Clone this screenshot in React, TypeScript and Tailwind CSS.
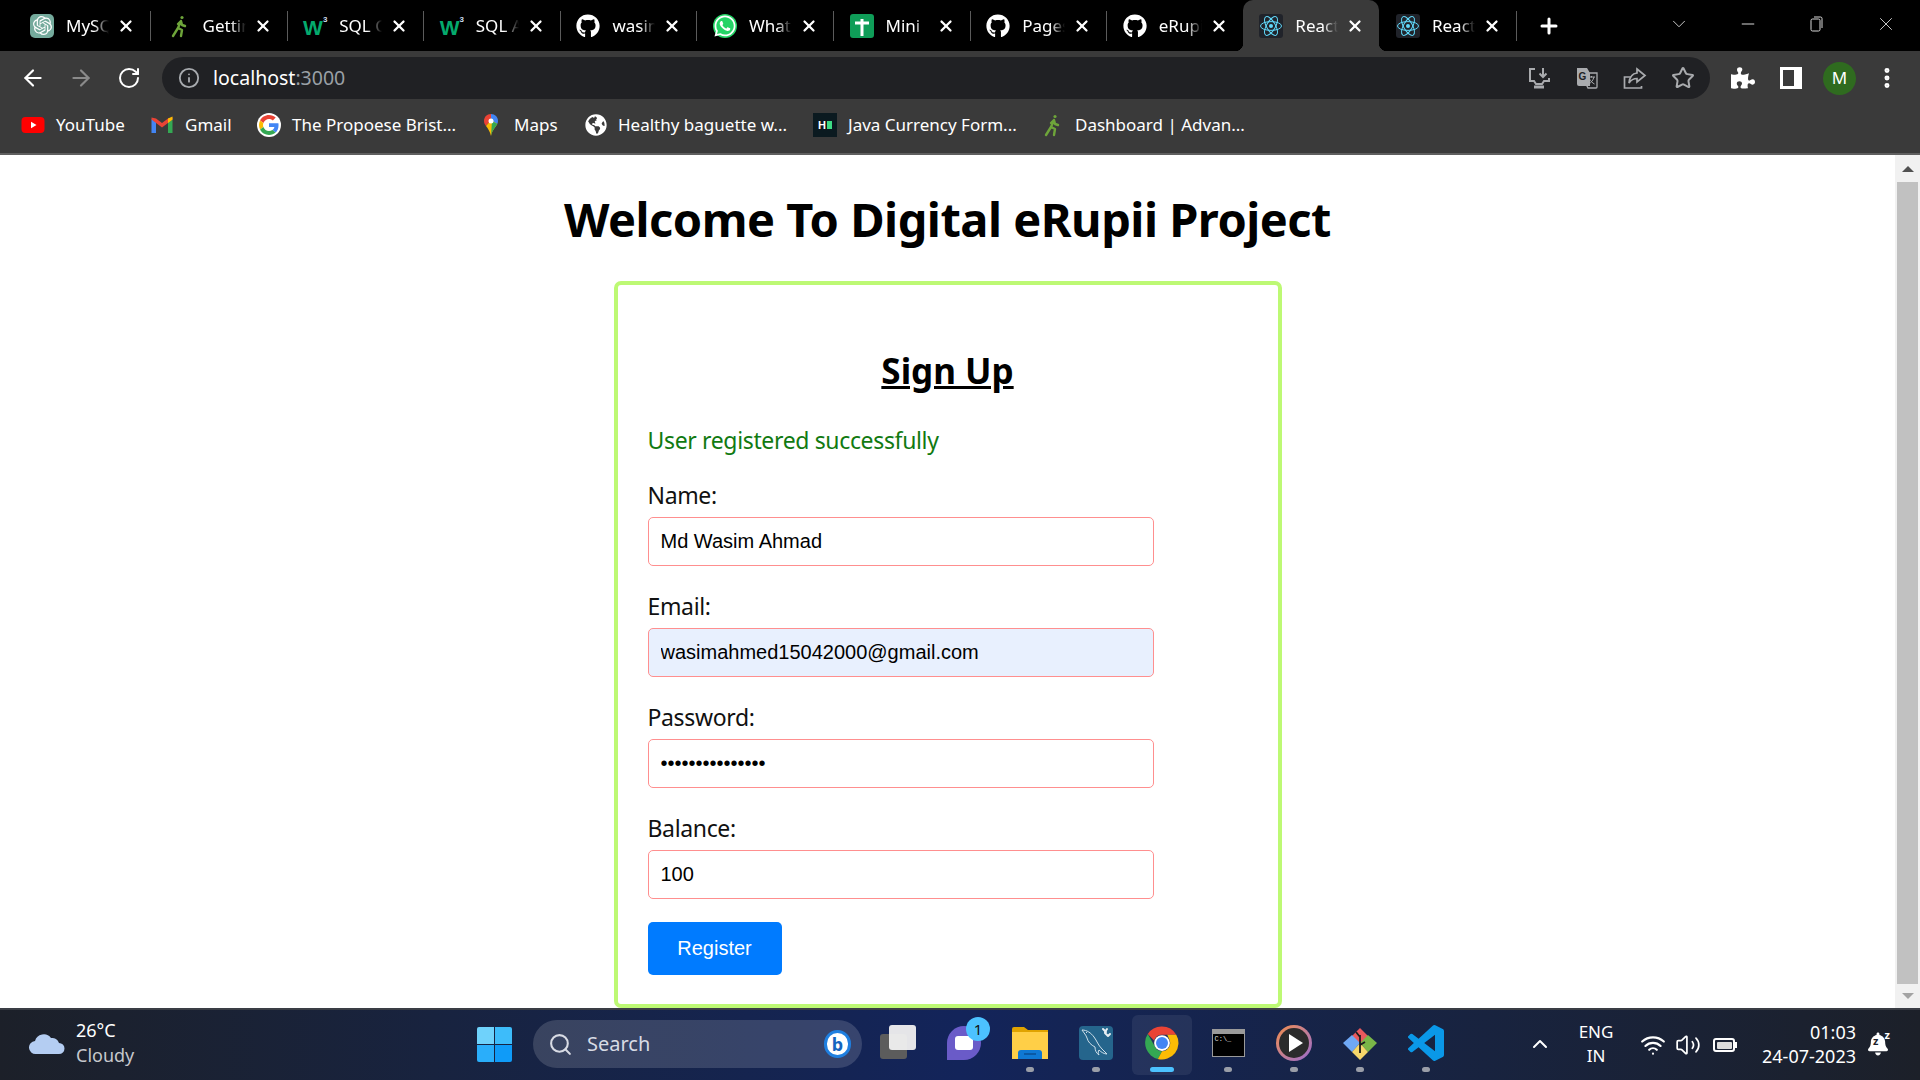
import React from 'react';
import { ArrowLeft, ArrowRight, ChevronDown, ChevronUp, EllipsisVertical, Info, Minus, Plus, RotateCw, Search, Star, Volume2, Wifi, X } from 'lucide-react';
import { FaBell, FaGithub, FaGlobeAmericas, FaPuzzlePiece, FaWhatsapp } from 'react-icons/fa';
import { SiOpenai } from 'react-icons/si';

const Runner = () => (
  <svg viewBox="0 0 24 24" className="w-6 h-6" fill="none" stroke="#6ea53a" strokeWidth="2.4" strokeLinecap="round" strokeLinejoin="round">
    <circle cx="15" cy="3.5" r="1.6" fill="#6ea53a" stroke="none" />
    <path d="M14 7l-3 7-5 8M14 7l1 4 3 1M11 14l4 2-1 6M14 7l-3 3" />
  </svg>
);

const ChatGpt = () => (
  <div className="w-6 h-6 rounded-[5px] bg-[#74aa9c] flex items-center justify-center">
    <SiOpenai className="w-[19px] h-[19px] text-white" />
  </div>
);

const W3 = () => (
  <div className="w-6 h-6 flex items-start justify-center text-[#04aa6d] font-bold leading-none font-['Liberation_Sans',sans-serif]">
    <span className="text-[21px] mt-[3px]">W</span>
    <span className="text-[8px] text-[#cde] mt-[2px]">3</span>
  </div>
);

const GitHub = () => <FaGithub className="w-6 h-6 text-white" />;

const WhatsApp = () => (
  <div className="w-6 h-6 rounded-full bg-[#25d366] flex items-center justify-center">
    <FaWhatsapp className="w-6 h-6 text-white" />
  </div>
);

const Mini = () => (
  <div className="w-6 h-6 rounded-[3px] bg-[#0f9d58] flex items-center justify-center">
    <svg viewBox="0 0 24 24" className="w-6 h-6" stroke="#fff" strokeWidth="3">
      <path d="M5 9h14M12 5v17" />
    </svg>
  </div>
);

const ReactLogo = () => (
  <div className="w-6 h-6 rounded-[3px] bg-[#20232a] flex items-center justify-center">
    <svg viewBox="-12 -12 24 24" className="w-6 h-6" fill="none" stroke="#61dafb" strokeWidth="1">
      <circle r="2" fill="#61dafb" stroke="none" />
      <ellipse rx="10.5" ry="4.4" />
      <ellipse rx="10.5" ry="4.4" transform="rotate(60)" />
      <ellipse rx="10.5" ry="4.4" transform="rotate(120)" />
    </svg>
  </div>
);

const tabs = [
  { title: 'MySQL', icon: <ChatGpt /> },
  { title: 'Getting', icon: <Runner /> },
  { title: 'SQL Cre', icon: <W3 /> },
  { title: 'SQL And', icon: <W3 /> },
  { title: 'wasim', icon: <GitHub /> },
  { title: 'WhatsApp', icon: <WhatsApp /> },
  { title: 'Mini', icon: <Mini /> },
  { title: 'Pages', icon: <GitHub /> },
  { title: 'eRupii', icon: <GitHub /> },
  { title: 'React', icon: <ReactLogo />, active: true },
  { title: 'React', icon: <ReactLogo /> },
];

const GoogleG = () => (
  <div className="w-6 h-6 rounded-full bg-white flex items-center justify-center">
    <svg viewBox="0 0 48 48" className="w-5 h-5">
      <path fill="#ea4335" d="M24 9.5c3.5 0 6.700 1.200 9.200 3.600l6.900-6.900C35.900 2.400 30.500 0 24 0 14.600 0 6.500 5.400 2.600 13.200l8 6.200C12.500 13.600 17.800 9.500 24 9.500z" />
      <path fill="#4285f4" d="M46.900 24.500c0-1.600-.1-3.100-.4-4.500H24v9h12.900c-.6 3-2.200 5.500-4.800 7.200l7.700 6c4.500-4.200 7.100-10.300 7.100-17.700z" />
      <path fill="#fbbc05" d="M10.500 28.600c-.5-1.400-.8-3-.8-4.600s.3-3.200.8-4.600l-8-6.200C.9 16.500 0 20.100 0 24s.9 7.500 2.600 10.800l7.900-6.200z" />
      <path fill="#34a853" d="M24 48c6.500 0 11.900-2.100 15.900-5.800l-7.700-6c-2.200 1.500-4.900 2.300-8.200 2.300-6.200 0-11.500-4.200-13.400-9.800l-8 6.200C6.500 42.600 14.600 48 24 48z" />
    </svg>
  </div>
);

const YouTube = () => (
  <svg viewBox="0 0 24 24" className="w-6 h-6">
    <rect x="0.500" y="4" width="23" height="16" rx="4" fill="#ff0000" />
    <path d="M10 8.800v6.400l5.500-3.200z" fill="#fff" />
  </svg>
);

const Gmail = () => (
  <svg viewBox="0 0 24 24" className="w-6 h-6">
    <path d="M1.500 6v14h4.500V9z" fill="#4285f4" />
    <path d="M22.500 6v14H18V9z" fill="#34a853" />
    <path d="M1.500 6.500L12 14.500l10.500-8V4.500L18 5.500 12 10 6 5.500 1.500 4.500z" fill="#ea4335" />
    <path d="M18 5.500l4.500-2v3L18 10z" fill="#fbbc05" />
  </svg>
);

const MapsPin = () => (
  <svg viewBox="0 0 24 24" className="w-6 h-6">
    <path d="M12 1C7.700 1 5 4.200 5 8c0 2 .8 3.400 2 5l5-6z" fill="#ea4335" />
    <path d="M12 1c4 0 7 3.200 7 7 0 1-.2 2-.7 3L12 8z" fill="#4285f4" />
    <path d="M7 13l5-6 6.300 4c-1.500 3-5 5.500-6.300 12-.8-4-3-7.500-5-10z" fill="#fbbc05" />
    <path d="M12 23c1.300-6.500 4.800-9 6.300-12L13 8z" fill="#34a853" />
    <circle cx="12" cy="8" r="2.500" fill="#fff" />
  </svg>
);

const JavaLogo = () => (
  <div className="w-6 h-6 bg-[#0b1a20] flex items-center justify-center gap-[1px] text-[11px] font-bold text-white font-['Liberation_Sans',sans-serif]">
    H<span className="w-[5px] h-[8px] bg-[#3ddc84]" />
  </div>
);

const bookmarks = [
  { label: 'YouTube', icon: <YouTube />, width: 'w-[129px]' },
  { label: 'Gmail', icon: <Gmail />, width: 'w-[107px]' },
  { label: 'The Propoese Brist...', icon: <GoogleG />, width: 'w-[222px]' },
  { label: 'Maps', icon: <MapsPin />, width: 'w-[106px]' },
  { label: 'Healthy baguette w...', icon: <FaGlobeAmericas className="w-[22px] h-[22px] text-white" />, width: 'w-[228px]' },
  { label: 'Java Currency Form...', icon: <JavaLogo />, width: 'w-[227px]' },
  { label: 'Dashboard | Advan...', icon: <Runner />, width: 'w-[260px]' },
];

const TabBar = () => (
  <div className="h-[51px] bg-black flex items-end pl-[14px] text-white shrink-0">
    {tabs.map((tab, index) => (
      <React.Fragment key={index}>
        <div className={`w-[136px] h-[51px] flex items-center pl-[16px] rounded-t-[10px] relative ${tab.active ? 'bg-[#3a3a3a]' : ''}`}>
          {tab.active && <div className="absolute -left-[8px] bottom-0 w-[8px] h-[8px] bg-[radial-gradient(circle_at_0_0,transparent_8px,#3a3a3a_8.5px)]" />}
          {tab.active && <div className="absolute -right-[8px] bottom-0 w-[8px] h-[8px] bg-[radial-gradient(circle_at_100%_0,transparent_8px,#3a3a3a_8.5px)]" />}
          {tab.icon}
          <span className="ml-[12px] w-[43px] text-[17px] whitespace-nowrap overflow-hidden [mask-image:linear-gradient(to_right,black_65%,transparent)]">{tab.title}</span>
          <X className="ml-[8px] w-[18px] h-[18px]" strokeWidth={3} />
        </div>
        <div className={`w-[0.6px] h-[30px] self-center ${tab.active || tabs[index + 1]?.active ? 'bg-transparent' : 'bg-[#5b5b5b]'}`} />
      </React.Fragment>
    ))}
    <div className="self-center ml-[16px] w-[32px] flex justify-center">
      <Plus className="w-[24px] h-[24px]" strokeWidth={3} />
    </div>
    <div className="self-center ml-auto flex items-center text-[#d8d8d8]">
      <ChevronDown className="w-[22px] h-[22px] mr-[48px] mb-[4px]" strokeWidth={1} />
      <Minus className="w-[20px] h-[20px] mr-[49px] mb-[4px]" strokeWidth={1.200} />
      <svg viewBox="0 0 20 20" className="w-[20px] h-[20px] mr-[48px] mb-[4px]" fill="none" stroke="#d8d8d8" strokeWidth="1">
        <rect x="4" y="5" width="9" height="12" rx="1.500" />
        <path d="M7 3h6.500A1.500 1.500 0 0 1 15 4.500V14" />
      </svg>
      <X className="w-[22px] h-[22px] mr-[23px] mb-[4px]" strokeWidth={1} />
    </div>
  </div>
);

const Toolbar = () => (
  <div className="h-[54px] bg-[#3a3a3a] flex items-center shrink-0">
    <ArrowLeft className="ml-[20px] w-[26px] h-[26px] text-white" strokeWidth={2} />
    <ArrowRight className="ml-[22px] w-[26px] h-[26px] text-[#8a8a8a]" strokeWidth={2} />
    <RotateCw className="ml-[23px] w-[24px] h-[24px] text-white" strokeWidth={2} />
    <div className="ml-[21px] w-[1548px] h-[42px] rounded-full bg-[#202124] flex items-center">
      <Info className="ml-[16px] w-[22px] h-[22px] text-[#a8abaf]" strokeWidth={2} />
      <span className="ml-[13px] text-[19.5px] text-white">localhost<span className="text-[#9aa0a6]">:3000</span></span>
      <div className="ml-auto flex items-center gap-[24px] mr-[15px] text-[#a9abae]">
        <svg viewBox="0 0 24 24" className="w-[24px] h-[24px]" fill="none" stroke="currentColor" strokeWidth="2">
          <path d="M8 3H3v12h4l2 3h6l2-3h5v-3M16 2v9M12.500 7.500L16 11l3.500-3.500" />
          <path d="M7 21h10" strokeWidth="3" />
        </svg>
        <svg viewBox="0 0 24 24" className="w-[24px] h-[24px]">
          <path d="M2 2h10l3 5v13H4a2 2 0 0 1-2-2z" fill="#a9abae" />
          <path d="M11 7h11v14a1 1 0 0 1-1 1h-8l-2-4" fill="none" stroke="#a9abae" strokeWidth="1.300" />
          <text x="3.500" y="14" fontSize="10" fontWeight="700" fill="#202124" fontFamily="Liberation Sans">G</text>
          <path d="M13 11h7M16.500 10v1.500M19 11c-1 3.500-3 6-5.500 7M14.500 13c1 2 3 4 5 5" fill="none" stroke="#a9abae" strokeWidth="1" />
        </svg>
        <svg viewBox="0 0 24 24" className="w-[24px] h-[24px]" fill="none" stroke="currentColor" strokeWidth="1.700">
          <path d="M8 11H1.500v11h17v-2" />
          <path d="M14 3l8 6.500-8 6.500v-3.500c-4 0-6 1.500-8 4.500 .5-5 3-9.500 8-10z" />
        </svg>
        <Star className="w-[24px] h-[24px]" strokeWidth={2} />
      </div>
    </div>
    <FaPuzzlePiece className="ml-[21px] w-[24px] h-[24px] text-white" />
    <div className="ml-[25px] w-[22px] h-[22px] border-[3px] border-r-[8px] border-white" />
    <div className="ml-[21px] w-[33px] h-[33px] rounded-full bg-[#2f6b1f] flex items-center justify-center text-white text-[17px]">M</div>
    <EllipsisVertical className="ml-[18px] w-[26px] h-[26px] text-white" strokeWidth={2.600} />
  </div>
);

const BookmarksBar = () => (
  <div className="h-[50px] bg-[#3a3a3a] border-b-2 border-[#5f5f5f] flex items-center pl-[21px] pb-[8px] text-white text-[17px] shrink-0">
    {bookmarks.map((bookmark, index) => (
      <div key={index} className={`${bookmark.width} flex items-center gap-[11px] whitespace-nowrap`}>
        {bookmark.icon}
        <span>{bookmark.label}</span>
      </div>
    ))}
  </div>
);

const Field = ({ label, value, type = 'text', filled = false }: { label: string; value: string; type?: string; filled?: boolean }) => (
  <div className="flex flex-col">
    <label className="h-[32px] leading-[31px] mb-[5px] text-[23px] tracking-[-0.35px] text-[#111]">{label}</label>
    <input
      readOnly
      type={type}
      value={value}
      className={`w-[506px] h-[49px] px-[12px] pb-[1px] border-[1.500px] border-[#ff8f8f] rounded-[5px] text-[20px] text-black font-['Liberation_Sans',sans-serif] outline-none ${filled ? 'bg-[#e8f0fe]' : 'bg-white'}`}
    />
  </div>
);

const SignUpCard = () => (
  <div className="mt-[30px] w-[668px] h-[727px] border-[4px] border-[#bdf974] rounded-[7px] bg-white pl-[30px] pt-[62px] shrink-0">
    <h2 className="h-[48px] leading-[48px] pr-[30px] text-center text-[35px] font-bold underline text-black">Sign Up</h2>
    <p className="mt-[29px] h-[33px] leading-[32px] text-[23px] tracking-[-0.35px] text-[#117a11]">User registered successfully</p>
    <div className="mt-[23px] flex flex-col gap-[25px]">
      <Field label="Name:" value="Md Wasim Ahmad" />
      <Field label="Email:" value="wasimahmed15042000@gmail.com" filled />
      <Field label="Password:" value="aaaaaaaaaaaaaaa" type="password" />
      <Field label="Balance:" value="100" />
    </div>
    <button className="mt-[23px] w-[134px] h-[53px] pb-[2px] bg-[#007bff] rounded-[5px] text-white text-[20px] font-['Liberation_Sans',sans-serif]">Register</button>
  </div>
);

const Scrollbar = () => (
  <div className="w-[25px] bg-[#f1f1f1] flex flex-col items-center shrink-0">
    <div className="h-[27px] flex items-center justify-center">
      <div className="w-0 h-0 border-x-[6px] border-x-transparent border-b-[6px] border-b-[#505050]" />
    </div>
    <div className="w-[21px] flex-1 bg-[#c1c1c1]" />
    <div className="h-[24px] flex items-center justify-center">
      <div className="w-0 h-0 border-x-[6px] border-x-transparent border-t-[6px] border-t-[#a3a3a3]" />
    </div>
  </div>
);

const TaskIcon = ({ children, dot = false, active = false }: { children: React.ReactNode; dot?: boolean; active?: boolean }) => (
  <div className="w-[66px] h-[60px] flex flex-col items-center relative">
    <div className={`w-[60px] h-[60px] rounded-[6px] flex items-center justify-center pb-[4px] ${active ? 'bg-[#ffffff12]' : ''}`}>{children}</div>
    {dot && <div className="absolute bottom-[3px] w-[8px] h-[5px] rounded-full bg-[#9a9ea8]" />}
    {active && <div className="absolute bottom-[3px] w-[24px] h-[5px] rounded-full bg-[#4cc2ff]" />}
  </div>
);

const ChromeLogo = () => (
  <svg viewBox="0 0 48 48" className="w-[36px] h-[36px]">
    <path d="M24 2a22 22 0 0 1 19 11H24a11 11 0 0 0-10.500 7.500L5 12A22 22 0 0 1 24 2z" fill="#ea4335" />
    <path d="M5 12l9.500 16.500A11 11 0 0 0 24 35l-5.500 10.300A22 22 0 0 1 5 12z" fill="#34a853" />
    <path d="M43 13a22 22 0 0 1-24.500 32.300L24 35a11 11 0 0 0 9.500-16.500L31 13z" fill="#fbbc05" />
    <circle cx="24" cy="24" r="10.500" fill="#fff" />
    <circle cx="24" cy="24" r="8" fill="#4285f4" />
  </svg>
);

const VsCode = () => (
  <svg viewBox="0 0 24 24" className="w-[36px] h-[36px]" fill="#0a98e8">
    <path d="M23.15 2.587L18.21.21a1.494 1.494 0 0 0-1.705.29l-9.46 8.63-4.12-3.128a.999.999 0 0 0-1.276.057L.327 7.261A1 1 0 0 0 .326 8.74L3.899 12 .326 15.26a1 1 0 0 0 .001 1.479L1.65 17.94a.999.999 0 0 0 1.276.057l4.12-3.128 9.46 8.63a1.492 1.492 0 0 0 1.704.29l4.942-2.377A1.5 1.5 0 0 0 24 20.06V3.939a1.5 1.5 0 0 0-.85-1.352zm-5.146 14.861L10.826 12l7.178-5.448v10.896z" />
  </svg>
);

const MySqlLogo = () => (
  <div className="w-[34px] h-[34px] rounded-[4px] bg-[#25658c]">
    <svg viewBox="0 0 34 34" className="w-[34px] h-[34px]" fill="none" stroke="#cfe0ea" strokeWidth="1" strokeLinejoin="round">
      <path d="M3 4c5 0 9 3 12 7 3 4 4 8 8 12l5 5c-3 0-6-2-8-4-1 1-1 3 0 5-3-2-4-5-4-8-4-2-7-5-8-9C7 9 5 7 3 4z" />
      <path d="M7 6l1 1" />
      <path d="M24 3l3 3-1 1 3 3 2-2M28 3l-2 3" strokeWidth="2" stroke="#e6eef3" strokeLinecap="round" />
    </svg>
  </div>
);

const Taskbar = () => (
  <div className="h-[72px] border-t-2 border-[#3a3d45] bg-gradient-to-r from-[#1c2029] via-[#13245a] to-[#1c2029] flex items-center text-white shrink-0 relative">
    <svg viewBox="0 0 36 24" className="ml-[29px] w-[36px] h-[24px] mb-[4px]">
      <path d="M7 23a6.500 6.500 0 0 1-1-13 9 9 0 0 1 16-3 7 7 0 0 1 8 5 5.500 5.500 0 0 1 0 11z" fill="#b4cdf2" />
    </svg>
    <div className="ml-[11px] w-[385px] text-[18px] leading-[25px] mb-[4px]">
      <div>26°C</div>
      <div className="text-[#c6c8cc]">Cloudy</div>
    </div>
    <div className="w-[66px] flex justify-center mb-[2px]">
      <div className="w-[35px] h-[35px] grid grid-cols-2 grid-rows-2 gap-[1px]">
        <div className="rounded-tl-[2px] bg-[#6fd2fb]" />
        <div className="rounded-tr-[2px] bg-[#3dbcfa]" />
        <div className="rounded-bl-[2px] bg-[#2aaefa]" />
        <div className="rounded-br-[2px] bg-[#0f9bf8]" />
      </div>
    </div>
    <div className="ml-[6px] w-[329px] h-[48px] mb-[2px] rounded-full bg-[#ffffff26] flex items-center text-[#d8dbe4] text-[20px]">
      <Search className="ml-[15px] w-[25px] h-[25px]" strokeWidth={2} />
      <span className="ml-[14px]">Search</span>
      <div className="ml-auto mr-[11px] w-[27px] h-[28px] rounded-full bg-white border-[3px] border-[#1f7fe0] flex items-center justify-center text-[#1565c0] text-[18px] font-bold leading-none">b</div>
    </div>
    <div className="ml-[3px] flex items-center">
      <TaskIcon>
        <div className="relative w-[36px] h-[36px]">
          <div className="absolute left-0 top-[9px] w-[27px] h-[25px] rounded-[3px] bg-[#5c5c5c]" />
          <div className="absolute left-[9px] top-0 w-[27px] h-[25px] rounded-[3px] bg-[#f0f0f0] opacity-95" />
        </div>
      </TaskIcon>
      <TaskIcon>
        <div className="relative w-[34px] h-[34px] rounded-full rounded-bl-[4px] bg-[#6a5bc8] flex items-center justify-center">
          <div className="w-[18px] h-[14px] rounded-[3px] bg-white" />
          <div className="absolute -top-[9px] -right-[9px] w-[24px] h-[24px] rounded-full bg-[#4cc2ff] flex items-center justify-center text-[#111] text-[15px]">1</div>
        </div>
      </TaskIcon>
      <TaskIcon dot>
        <svg viewBox="0 0 36 32" className="w-[36px] h-[32px]">
          <path d="M0 2a2 2 0 0 1 2-2h10l4 3h20v6H0z" fill="#e0a300" />
          <path d="M0 5h36v27H0z" fill="#ffcf47" />
          <path d="M6 32V26a3 3 0 0 1 3-3h18a3 3 0 0 1 3 3v6z" fill="#0f78d4" />
          <path d="M12 27h12" stroke="#0a4f96" strokeWidth="1.500" />
        </svg>
      </TaskIcon>
      <TaskIcon dot>
        <MySqlLogo />
      </TaskIcon>
      <TaskIcon active>
        <ChromeLogo />
      </TaskIcon>
      <TaskIcon dot>
        <div className="w-[33px] h-[28px] border border-[#9a9a9a] bg-black">
          <div className="h-[4px] bg-[#9a9a9a]" />
          <div className="text-[7px] leading-[10px] pl-[2px] text-[#ddd] font-['Liberation_Mono',monospace]">C:\_</div>
        </div>
      </TaskIcon>
      <TaskIcon dot>
        <div className="w-[36px] h-[36px] rounded-full bg-gradient-to-br from-[#f48c3c] to-[#9a68c9] flex items-center justify-center">
          <div className="w-[30px] h-[30px] rounded-full bg-[#2b2b2b] flex items-center justify-center">
            <div className="ml-[3px] w-0 h-0 border-y-[9px] border-y-transparent border-l-[14px] border-l-white" />
          </div>
        </div>
      </TaskIcon>
      <TaskIcon dot>
        <svg viewBox="0 0 36 36" className="w-[36px] h-[36px]">
          <path d="M18 18L10 10l8-8 8 8z" fill="#e8595d" transform="translate(0 1)" />
          <path d="M18 18l-8-8-9 8 9 9z" fill="#6fa8f5" />
          <path d="M18 18l8-8 9 8-9 9z" fill="#7ab648" />
          <path d="M18 18l-8 9 8 8 8-8z" fill="#f6d76b" />
          <path d="M18 10v18M14 7l4 5M18 20l5-3" stroke="#1c1c1c" strokeWidth="1.800" fill="none" />
        </svg>
      </TaskIcon>
      <TaskIcon dot>
        <VsCode />
      </TaskIcon>
    </div>
    <ChevronUp className="ml-[69px] w-[24px] h-[24px] mb-[2px]" strokeWidth={2} />
    <div className="ml-[14px] w-[60px] text-center text-[17px] leading-[24px] mb-[2px]">
      <div>ENG</div>
      <div>IN</div>
    </div>
    <Wifi className="ml-[14px] w-[26px] h-[26px]" strokeWidth={2} />
    <Volume2 className="ml-[9px] w-[26px] h-[26px]" strokeWidth={1.600} />
    <div className="ml-[12px] w-[22px] h-[14px] rounded-[3px] border-2 border-white p-[1.500px] relative">
      <div className="w-full h-full rounded-[1px] bg-[#dddddd]" />
      <div className="absolute -right-[4px] top-[2px] w-[2px] h-[6px] bg-white" />
    </div>
    <div className="ml-[21px] w-[100px] text-right text-[18px] leading-[24px] mb-[2px] whitespace-nowrap">
      <div>01:03</div>
      <div>24-07-2023</div>
    </div>
    <div className="ml-[12px] relative w-[20px] h-[24px] mb-[2px]">
      <FaBell className="w-[20px] h-[24px] text-white" />
      <span className="absolute left-[5px] top-[3px] text-[11px] leading-none font-bold text-[#1c2029]">z</span>
      <span className="absolute -right-[2px] -top-[3px] text-[11px] leading-none font-bold">z</span>
    </div>
  </div>
);

export default function App() {
  return (
    <div className="w-[1920px] h-[1080px] flex flex-col overflow-hidden font-['Noto_Sans',sans-serif]">
      <TabBar />
      <Toolbar />
      <BookmarksBar />
      <div className="flex-1 min-h-0 flex bg-white">
        <main className="flex-1 flex flex-col items-center overflow-hidden">
          <h1 className="mt-[32px] h-[64px] leading-[64px] text-[47px] tracking-[-0.5px] font-bold text-black whitespace-nowrap">Welcome To Digital eRupii Project</h1>
          <SignUpCard />
        </main>
        <Scrollbar />
      </div>
      <Taskbar />
    </div>
  );
}
